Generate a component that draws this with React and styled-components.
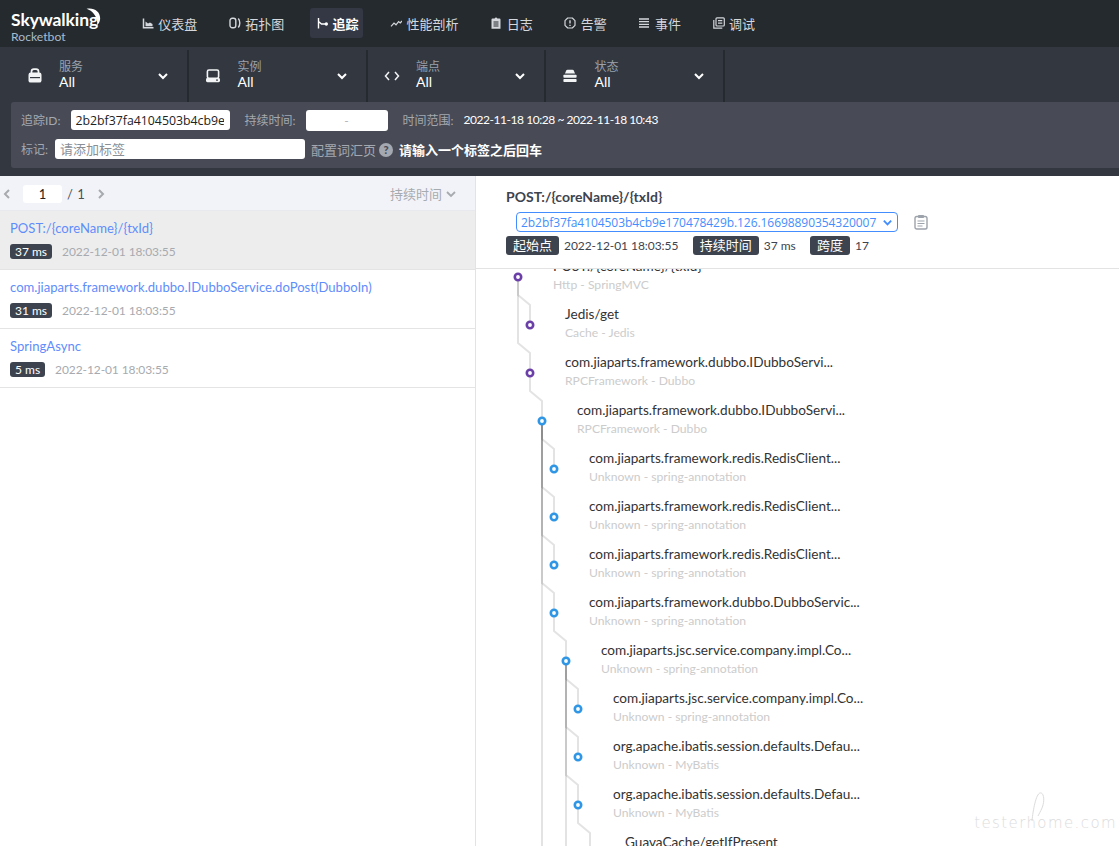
import styled, { createGlobalStyle } from "styled-components"

const LATO = `Lato, "Noto Sans CJK SC", sans-serif`

const navItems = [
	{ name: "仪表盘", icon: "chart" },
	{ name: "拓扑图", icon: "topology" },
	{ name: "追踪", icon: "trace", active: true },
	{ name: "性能剖析", icon: "trend" },
	{ name: "日志", icon: "log" },
	{ name: "告警", icon: "alarm" },
	{ name: "事件", icon: "list" },
	{ name: "调试", icon: "debug" },
]

const selectors = [
	{ label: "服务", icon: "service" },
	{ label: "实例", icon: "instance" },
	{ label: "端点", icon: "code" },
	{ label: "状态", icon: "status" },
]

const traces = [
	{ title: "POST:/{coreName}/{txId}", ms: "37 ms", active: true },
	{ title: "com.jiaparts.framework.dubbo.IDubboService.doPost(DubboIn)", ms: "31 ms" },
	{ title: "SpringAsync", ms: "5 ms" },
]

const PURPLE = "#6b3fa8"
const BLUE = "#2f96e6"

// parent is the index of the span this one hangs from
const spans = [
	{ title: "POST:/{coreName}/{txId}", sub: "Http - SpringMVC", depth: 0, parent: -1, color: PURPLE },
	{ title: "Jedis/get", sub: "Cache - Jedis", depth: 1, parent: 0, color: PURPLE },
	{ title: "com.jiaparts.framework.dubbo.IDubboServi...", sub: "RPCFramework - Dubbo", depth: 1, parent: 0, color: PURPLE },
	{ title: "com.jiaparts.framework.dubbo.IDubboServi...", sub: "RPCFramework - Dubbo", depth: 2, parent: 2, color: BLUE },
	{ title: "com.jiaparts.framework.redis.RedisClient...", sub: "Unknown - spring-annotation", depth: 3, parent: 3, color: BLUE },
	{ title: "com.jiaparts.framework.redis.RedisClient...", sub: "Unknown - spring-annotation", depth: 3, parent: 3, color: BLUE },
	{ title: "com.jiaparts.framework.redis.RedisClient...", sub: "Unknown - spring-annotation", depth: 3, parent: 3, color: BLUE },
	{ title: "com.jiaparts.framework.dubbo.DubboServic...", sub: "Unknown - spring-annotation", depth: 3, parent: 3, color: BLUE },
	{ title: "com.jiaparts.jsc.service.company.impl.Co...", sub: "Unknown - spring-annotation", depth: 4, parent: 7, color: BLUE },
	{ title: "com.jiaparts.jsc.service.company.impl.Co...", sub: "Unknown - spring-annotation", depth: 5, parent: 8, color: BLUE },
	{ title: "org.apache.ibatis.session.defaults.Defau...", sub: "Unknown - MyBatis", depth: 5, parent: 8, color: BLUE },
	{ title: "org.apache.ibatis.session.defaults.Defau...", sub: "Unknown - MyBatis", depth: 5, parent: 8, color: BLUE },
	{ title: "GuavaCache/getIfPresent", sub: "", depth: 6, parent: 11, color: BLUE },
	{ title: "", sub: "", depth: 5, parent: 8, color: BLUE },
	{ title: "", sub: "", depth: 3, parent: 3, color: BLUE },
]

const ROW = 48
const nodeX = (depth) => 42 + depth * 12
const nodeY = (i) => 24 + i * ROW

const NavIcon = ({ type }) => {
	const shapes = {
		chart: (
			<g fill="none" stroke="currentColor">
				<path d="M1.5 1.500v9.300H11.500" strokeWidth="1.500" />
				<path d="M3.500 9.300V4.500l2.500 2 2-1 2.500 1.500v2.300z" fill="currentColor" stroke="none" />
			</g>
		),
		topology: (
			<g fill="none" stroke="currentColor" strokeWidth="1.400">
				<rect x="1" y="1.300" width="5.800" height="9.400" rx="2.200" />
				<path d="M9.300 1.500c2 2.400 2 6.600 0 9" />
			</g>
		),
		trace: (
			<g fill="none" stroke="currentColor" strokeWidth="1.400">
				<path d="M2.500 1v10.500M2.500 4.500l3 2.500h4.500" />
				<circle cx="10.300" cy="7" r="1" fill="currentColor" />
			</g>
		),
		trend: <path d="M1 9.300l3-3.300 2 1.800 2.600-3.200 1.600 1.400L12 4" fill="none" stroke="currentColor" strokeWidth="1.200" />,
		log: (
			<g>
				<path d="M1.500 2.500A1 1 0 0 1 2.500 1.500h2L6 .3l1.500 1.200h2a1 1 0 0 1 1 1V11.700h-9z" fill="currentColor" />
				<path d="M3.500 5h5M3.500 7h5M3.500 9h5" stroke="#252a2f" strokeWidth="1" />
			</g>
		),
		alarm: (
			<g fill="none" stroke="currentColor">
				<path d="M3.700 1h4.600L11 3.700v4.600L8.300 11H3.700L1 8.300V3.700z" strokeWidth="1.200" strokeLinejoin="round" />
				<path d="M6 3.200v3.400M6 7.700v1.200" strokeWidth="1.400" />
			</g>
		),
		list: <path d="M1 2h10M1 4.700h10M1 7.300h10M1 10h10" fill="none" stroke="currentColor" strokeWidth="1.300" />,
		debug: (
			<g fill="none" stroke="currentColor" strokeWidth="1.200">
				<path d="M.8 3v8.200h8.500" />
				<rect x="3" y=".8" width="8.300" height="8.200" rx="1" />
				<path d="M5 3.600h4.300M5 6.200h4.300" />
			</g>
		),
	}
	return (
		<NavSvg viewBox="0 0 12 12" width="12" height="12">
			{shapes[type]}
		</NavSvg>
	)
}

const SelectorIcon = ({ type }) => {
	const shapes = {
		service: (
			<g>
				<path d="M4.500 5.500V3.600A2.400 2.400 0 0 1 6.900 1.200h2.200a2.400 2.400 0 0 1 2.400 2.400v1.900" fill="none" stroke="currentColor" strokeWidth="1.700" />
				<rect x="1.500" y="4.600" width="13" height="10" rx="2.200" fill="currentColor" />
				<rect x="3" y="9" width="10" height="1.200" fill="#333840" />
			</g>
		),
		instance: (
			<g>
				<rect x="2.400" y="2" width="11.200" height="8.400" rx="1.600" fill="none" stroke="currentColor" strokeWidth="1.600" />
				<rect x="1" y="10" width="14" height="4.200" rx="1.400" fill="currentColor" />
				<circle cx="12" cy="12.100" r=".9" fill="#333840" />
			</g>
		),
		code: <path d="M5 4L1.500 8 5 12M11 4l3.500 4-3.500 4" fill="none" stroke="currentColor" strokeWidth="1.500" />,
		status: (
			<g>
				<path d="M3 5.600l1.200-3A1.400 1.400 0 0 1 5.500 1.700h5a1.400 1.400 0 0 1 1.300.9l1.200 3z" fill="currentColor" />
				<rect x="1.400" y="6.800" width="13.200" height="3" rx=".8" fill="currentColor" />
				<rect x="1.400" y="11" width="13.200" height="3" rx=".8" fill="currentColor" />
			</g>
		),
	}
	return (
		<SelectorSvg viewBox="0 0 16 16" width="16" height="16">
			{shapes[type]}
		</SelectorSvg>
	)
}

const Chevron = ({ size = 12, width = 2 }) => (
	<svg viewBox="0 0 12 12" width={size} height={size}>
		<path d="M2 4l4 4 4-4" fill="none" stroke="currentColor" strokeWidth={width} />
	</svg>
)

const Logo = () => (
	<LogoWrapper>
		<LogoMark>
			Skywalking
			<Crescent viewBox="0 0 22 22" width="19" height="19">
				<path d="M3 1c9-2 17 4 15.500 13-.5 2.400-1.500 4.500-3.500 6 1-5-.5-9.500-3.500-13C9.500 4 6.500 2.200 3 1z" fill="#fff" />
			</Crescent>
		</LogoMark>
		<LogoSub>Rocketbot</LogoSub>
	</LogoWrapper>
)

const TraceGraph = () => (
	<GraphSvg width="160" height="800">
		{spans.map((span, i) => {
			if (span.parent < 0) return null
			const px = nodeX(spans[span.parent].depth)
			const py = nodeY(span.parent)
			const cx = nodeX(span.depth)
			const cy = nodeY(i)
			return (
				<path
					key={i}
					d={`M${px} ${py}V${cy - 30}L${cx} ${cy - 20}V${cy}`}
					fill="none"
					stroke="rgba(0,0,0,.11)"
					strokeWidth="2"
				/>
			)
		})}
		{spans.map((span, i) => (
			<circle key={i} cx={nodeX(span.depth)} cy={nodeY(i)} r="3.200" fill="#fff" stroke={span.color} strokeWidth="2.600" />
		))}
	</GraphSvg>
)

export default function App() {
	return (
		<Page>
			<GlobalStyle />
			<TopBar>
				<Logo />
				<NavList>
					{navItems.map((item) => (
						<NavItem key={item.name} $active={item.active}>
							<NavIcon type={item.icon} />
							{item.name}
						</NavItem>
					))}
				</NavList>
			</TopBar>
			<SelectorBar>
				{selectors.map((sel) => (
					<Selector key={sel.label}>
						<SelectorIcon type={sel.icon} />
						<SelectorText>
							<SelectorLabel>{sel.label}</SelectorLabel>
							<SelectorValue>All</SelectorValue>
						</SelectorText>
						<Chevron />
					</Selector>
				))}
			</SelectorBar>
			<SearchWrap>
				<SearchPanel>
					<SearchRow>
						<SearchLabel>追踪ID:</SearchLabel>
						<IdInput readOnly value="2b2bf37fa4104503b4cb9e170478429b.126.16698890354320007" />
						<SearchLabel $left={15}>持续时间:</SearchLabel>
						<DurationBox>-</DurationBox>
						<SearchLabel $left={15}>时间范围:</SearchLabel>
						<RangeText>2022-11-18 10:28 ~ 2022-11-18 10:43</RangeText>
					</SearchRow>
					<SearchRow>
						<SearchLabel>标记:</SearchLabel>
						<TagInput readOnly placeholder="请添加标签" />
						<VocabLink>配置词汇页</VocabLink>
						<HelpDot>?</HelpDot>
						<TagHint>请输入一个标签之后回车</TagHint>
					</SearchRow>
				</SearchPanel>
			</SearchWrap>
			<Main>
				<ListPane>
					<ListToolbar>
						<Pager>
							<PagerArrow viewBox="0 0 8 12" width="8" height="12">
								<path d="M6 2L2 6l4 4" fill="none" stroke="currentColor" strokeWidth="2" />
							</PagerArrow>
							<PageInput readOnly value="1" />
							<PageTotal>/ 1</PageTotal>
							<PagerArrow viewBox="0 0 8 12" width="8" height="12" $next>
								<path d="M2 2l4 4-4 4" fill="none" stroke="currentColor" strokeWidth="2" />
							</PagerArrow>
						</Pager>
						<SortButton>
							持续时间
							<Chevron size={12} width={1.8} />
						</SortButton>
					</ListToolbar>
					{traces.map((trace) => (
						<TraceItem key={trace.title} $active={trace.active}>
							<TraceTitle>{trace.title}</TraceTitle>
							<TraceMeta>
								<MsBadge>{trace.ms}</MsBadge>
								<TraceDate>2022-12-01 18:03:55</TraceDate>
							</TraceMeta>
						</TraceItem>
					))}
				</ListPane>
				<DetailPane>
					<DetailHeader>
						<DetailTitle>POST:/{"{coreName}"}/{"{txId}"}</DetailTitle>
						<IdRow>
							<IdSelect>
								2b2bf37fa4104503b4cb9e170478429b.126.16698890354320007
								<Chevron size={11} width={2} />
							</IdSelect>
							<svg viewBox="0 0 14 16" width="14" height="16">
								<rect x="1" y="2.500" width="12" height="12.500" rx="1.800" fill="none" stroke="#9da3ab" strokeWidth="1.400" />
								<rect x="4" y="1" width="6" height="3" rx=".8" fill="#9da3ab" />
								<path d="M3.500 7h7M3.500 9.500h7M3.500 12h5" stroke="#9da3ab" strokeWidth="1" />
							</svg>
						</IdRow>
						<MetaRow>
							<MetaTag>起始点</MetaTag>
							<MetaValue>2022-12-01 18:03:55</MetaValue>
							<MetaTag>持续时间</MetaTag>
							<MetaValue>37 ms</MetaValue>
							<MetaTag>跨度</MetaTag>
							<MetaValue>17</MetaValue>
						</MetaRow>
					</DetailHeader>
					<TreeArea>
						<TreeInner>
							<TraceGraph />
							{spans
								.filter((span) => span.title)
								.map((span, i) => (
									<SpanRow key={i} $depth={span.depth}>
										<SpanTitle>{span.title}</SpanTitle>
										<SpanSub>{span.sub}</SpanSub>
									</SpanRow>
								))}
						</TreeInner>
					</TreeArea>
				</DetailPane>
			</Main>
			<Watermark>
				testerhome.com
				<WatermarkLoop viewBox="0 0 16 30" width="16" height="30">
					<path d="M2 29C3 18 6 2 10 1c4-1 5 8 2 15-1.500 3.500-3 6-4 8" fill="none" stroke="#dcdcdc" strokeWidth="1" />
				</WatermarkLoop>
			</Watermark>
		</Page>
	)
}

const GlobalStyle = createGlobalStyle`
	html, body {
		margin: 0;
		padding: 0;
		height: 100%;
		overflow: hidden;
		background: #fff;
		font-family: ${LATO};
	}
	* {
		box-sizing: border-box;
	}
`

const Page = styled.div`
	position: relative;
	display: flex;
	flex-direction: column;
	height: 846px;
	overflow: hidden;
`

const TopBar = styled.header`
	display: flex;
	align-items: flex-start;
	height: 47px;
	flex-shrink: 0;
	padding-top: 8px;
	background: #252a2f;
`

const LogoWrapper = styled.div`
	width: 135.750px;
	padding: 2px 0 0 11px;
	flex-shrink: 0;
`

const LogoMark = styled.div`
	position: relative;
	width: 82px;
	color: #fff;
	font-size: 17.500px;
	font-weight: 700;
	line-height: 20px;
	letter-spacing: -.1px;
`

const Crescent = styled.svg`
	position: absolute;
	top: -2px;
	right: -10px;
`

const LogoSub = styled.div`
	color: #a8bccd;
	font-size: 12.200px;
	line-height: 13px;
`

const NavList = styled.nav`
	display: flex;
	align-items: center;
	gap: 20.600px;
`

const NavItem = styled.a`
	display: flex;
	align-items: center;
	gap: 4.500px;
	height: 30px;
	padding: 0 5px 0 6px;
	border-radius: 3px;
	background: ${(p) => (p.$active ? "#333844" : "transparent")};
	color: ${(p) => (p.$active ? "#fff" : "#d4d7dc")};
	font-size: 13px;
	font-weight: ${(p) => (p.$active ? 700 : 400)};
`

const NavSvg = styled.svg`
	flex-shrink: 0;
`

const SelectorBar = styled.div`
	display: flex;
	height: 55px;
	flex-shrink: 0;
	padding: 3px 0 0 10.500px;
	background: #333840;
`

const Selector = styled.div`
	display: flex;
	align-items: center;
	width: 178.500px;
	padding: 0 18px 0 16px;
	border-right: 2px solid #252a2f;
	color: #fff;
`

const SelectorSvg = styled.svg`
	flex-shrink: 0;
	color: #f2f3f5;
`

const SelectorText = styled.div`
	display: flex;
	flex: 1;
	flex-direction: column;
	margin-left: 16.500px;
	padding-bottom: 4px;
`

const SelectorLabel = styled.span`
	color: #9aa1ab;
	font-size: 12px;
	line-height: 15px;
`

const SelectorValue = styled.span`
	color: #fff;
	font-size: 14px;
	line-height: 16px;
`

const SearchWrap = styled.div`
	height: 74px;
	flex-shrink: 0;
	padding-left: 11px;
	background: #333840;
`

const SearchPanel = styled.div`
	display: flex;
	flex-direction: column;
	gap: 9px;
	height: 66px;
	padding: 8px 10px;
	border-radius: 3px 0 0 3px;
	background: #484b55;
`

const SearchRow = styled.div`
	display: flex;
	align-items: center;
	height: 20px;
`

const SearchLabel = styled.span`
	margin: 0 0 2px ${(p) => p.$left || 0}px;
	color: #a4a8b0;
	font-size: 12px;
	white-space: nowrap;
`

const IdInput = styled.input`
	width: 159px;
	height: 20px;
	margin-left: 10px;
	padding: 0 6px 0 5px;
	border: 0;
	border-radius: 3px;
	background: #fff;
	color: #222;
	font-family: "Open Sans", sans-serif;
	font-size: 12.300px;
	outline: none;
`

const DurationBox = styled.div`
	width: 82px;
	height: 21px;
	margin-left: 10px;
	border-radius: 3px;
	background: #fff;
	color: #b0b4ba;
	font-size: 12px;
	line-height: 21px;
	text-align: center;
`

const RangeText = styled.span`
	margin: 0 0 2px 10px;
	color: #fff;
	font-size: 12px;
	letter-spacing: -.45px;
	white-space: nowrap;
`

const TagInput = styled.input`
	width: 250px;
	height: 20px;
	margin-left: 7px;
	padding: 0 5px;
	border: 0;
	border-radius: 3px;
	background: #fff;
	font-family: ${LATO};
	font-size: 13px;
	outline: none;

	&::placeholder {
		color: #8a8f96;
	}
`

const VocabLink = styled.span`
	margin-left: 6px;
	color: #a4a8b0;
	font-size: 13px;
`

const HelpDot = styled.span`
	width: 14px;
	height: 14px;
	margin: 2px 0 0 3px;
	border-radius: 50%;
	background: #a4a8b0;
	color: #484b55;
	font-size: 11px;
	font-weight: 900;
	line-height: 14px;
	text-align: center;
`

const TagHint = styled.span`
	margin-left: 6px;
	color: #fff;
	font-size: 13px;
	font-weight: 700;
`

const Main = styled.main`
	display: flex;
	flex: 1;
	min-height: 0;
`

const ListPane = styled.section`
	width: 476px;
	flex-shrink: 0;
	border-right: 1px solid #e3e3e3;
`

const ListToolbar = styled.div`
	display: flex;
	align-items: center;
	justify-content: space-between;
	height: 35px;
	padding: 1px 18px 0 3px;
	border-bottom: 1px solid #e8e9ee;
	background: #f2f3f8;
`

const Pager = styled.div`
	display: flex;
	align-items: center;
`

const PagerArrow = styled.svg`
	margin-left: ${(p) => (p.$next ? "12px" : "0")};
	color: #a7aaaf;
`

const PageInput = styled.input`
	width: 39px;
	height: 18px;
	margin-left: 12px;
	border: 0;
	border-radius: 3px;
	background: #fff;
	color: #222;
	font-family: ${LATO};
	font-size: 13px;
	text-align: center;
	outline: none;
`

const PageTotal = styled.span`
	margin-left: 5px;
	color: #4a5058;
	font-size: 13px;
	word-spacing: 1px;
`

const SortButton = styled.div`
	display: flex;
	align-items: center;
	gap: 3px;
	color: #a7aaaf;
	font-size: 13px;
`

const TraceItem = styled.div`
	height: 59px;
	padding-left: 10px;
	border-bottom: 1px solid #e4e4e4;
	background: ${(p) => (p.$active ? "#ededed" : "#fff")};
`

const TraceTitle = styled.div`
	padding-top: 8px;
	color: #5f8dfb;
	font-size: 13.100px;
	line-height: 18px;
`

const TraceMeta = styled.div`
	display: flex;
	align-items: center;
	margin-top: 7px;
`

const MsBadge = styled.span`
	padding: 0 5px;
	border-radius: 3px;
	background: #3d444f;
	color: #fff;
	font-size: 12px;
	line-height: 15px;
`

const TraceDate = styled.span`
	margin-left: 10px;
	color: #a7aaaf;
	font-size: 12px;
	letter-spacing: -.1px;
`

const DetailPane = styled.section`
	display: flex;
	flex: 1;
	flex-direction: column;
	min-width: 0;
`

const DetailHeader = styled.div`
	height: 93px;
	flex-shrink: 0;
	padding: 12px 0 0 30px;
	border-bottom: 1px solid #e3e3e3;
`

const DetailTitle = styled.div`
	color: #3d444f;
	font-size: 14px;
	font-weight: 700;
	line-height: 18px;
`

const IdRow = styled.div`
	display: flex;
	align-items: center;
	gap: 16px;
	margin: 6px 0 0 10px;
`

const IdSelect = styled.div`
	display: flex;
	align-items: center;
	justify-content: space-between;
	width: 382px;
	height: 20px;
	padding: 0 4px;
	border: 1px solid #448dfe;
	border-radius: 4px;
	color: #448dfe;
	font-family: "Open Sans", sans-serif;
	font-size: 12px;
	letter-spacing: -.06px;
	white-space: nowrap;
`

const MetaRow = styled.div`
	display: flex;
	align-items: center;
	margin-top: 4px;
`

const MetaTag = styled.span`
	margin-right: 5px;
	padding: 0 7px;
	border-radius: 3px;
	background: #3d444f;
	color: #fff;
	font-size: 13px;
	line-height: 19px;
`

const MetaValue = styled.span`
	margin-right: 14.500px;
	color: #3d444f;
	font-size: 12px;
	letter-spacing: -.06px;
`

const TreeArea = styled.div`
	flex: 1;
	min-height: 0;
	overflow: hidden;
`

const TreeInner = styled.div`
	position: relative;
	margin-top: -16px;
`

const GraphSvg = styled.svg`
	position: absolute;
	top: 0;
	left: 0;
`

const SpanRow = styled.div`
	position: relative;
	height: ${ROW}px;
	padding: 4px 0 0 ${(p) => 77 + p.$depth * 12}px;
`

const SpanTitle = styled.div`
	color: #333;
	font-size: 13.600px;
	line-height: 18px;
	white-space: nowrap;
`

const SpanSub = styled.div`
	margin-top: 2px;
	color: #ccc;
	font-size: 12.150px;
	line-height: 16px;
	white-space: nowrap;
`

const Watermark = styled.div`
	position: absolute;
	right: 2px;
	bottom: 14px;
	color: #dcdcdc;
	font-family: "DejaVu Sans", sans-serif;
	font-size: 15px;
	font-weight: 200;
	letter-spacing: 1.400px;
	white-space: nowrap;
`

const WatermarkLoop = styled.svg`
	position: absolute;
	top: -22px;
	left: 56px;
`
